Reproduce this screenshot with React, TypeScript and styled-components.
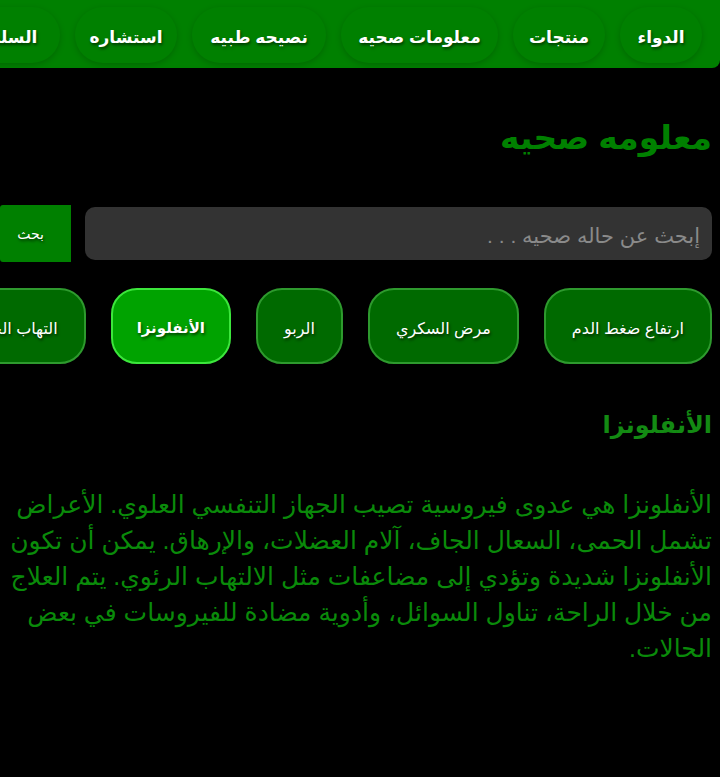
import React, { useState } from "react";
import styled, { createGlobalStyle } from "styled-components";

const Global = createGlobalStyle`
  html, body { margin: 0; padding: 0; background: #000; }
  body { font-family: Arial, "Liberation Sans", "DejaVu Sans", sans-serif; direction: rtl; overflow: hidden; }
  * { box-sizing: border-box; }
`;

const Nav = styled.nav`
  background: #008000;
  height: 68px;
  display: flex;
  align-items: center;
  gap: 15px;
  padding: 2px 18px 0 0;
  overflow: hidden;
  border-bottom-right-radius: 8px;
`;

const NavItem = styled.a<{ $w: number }>`
  flex: 0 0 auto;
  width: ${(p) => p.$w}px;
  height: 56px;
  border-radius: 28px;
  display: flex;
  align-items: center;
  justify-content: center;
  padding-top: 4px;
  color: #fff;
  font-weight: bold;
  font-size: 17px;
  text-shadow: 1px 2px 3px rgba(0, 0, 0, 0.55);
  box-shadow: 0 2px 6px rgba(0, 0, 0, 0.18);
  white-space: nowrap;
`;

const Main = styled.main`
  padding: 0 8px 0 0;
`;

const Title = styled.h1`
  margin: 50px 0 0;
  color: #008000;
  font-size: 33px;
  font-weight: bold;
  line-height: 40px;
`;

const SearchRow = styled.div`
  display: flex;
  align-items: center;
  gap: 14px;
  margin-top: 47px;
`;

const SearchInput = styled.input`
  flex: 1;
  height: 53px;
  background: #333;
  border: none;
  border-radius: 10px;
  padding: 4px 12px 0;
  color: #ddd;
  font-family: inherit;
  font-size: 21px;
  direction: rtl;
  outline: none;
  &::placeholder { color: #8a8a8a; }
`;

const SearchButton = styled.button`
  flex: 0 0 71px;
  height: 57px;
  background: #008000;
  border: none;
  border-radius: 3px 0 0 3px;
  padding: 0 10px 0 0;
  color: #fff;
  font-family: inherit;
  font-size: 14px;
  text-shadow: 1px 2px 3px rgba(0, 0, 0, 0.6);
`;

const Tabs = styled.div`
  display: flex;
  gap: 25px;
  margin-top: 26px;
  overflow: hidden;
`;

const Tab = styled.button<{ $active?: boolean }>`
  flex: 0 0 auto;
  height: 76px;
  padding: 4px ${(p) => (p.$active ? 24 : 26)}px 0;
  border-radius: 26px;
  border: 2px solid ${(p) => (p.$active ? "#3ce63c" : "#2e9a2e")};
  background: ${(p) => (p.$active ? "#00a300" : "#006a00")};
  color: #fff;
  font-family: inherit;
  font-size: ${(p) => (p.$active ? 15 : 16)}px;
  font-weight: ${(p) => (p.$active ? "bold" : "normal")};
  text-shadow: 1px 2px 3px rgba(0, 0, 0, 0.6);
  white-space: nowrap;
`;

const Heading = styled.h2`
  margin: 44px 0 0;
  color: #138a13;
  font-size: 24px;
  font-weight: bold;
  line-height: 34px;
`;

const Body = styled.p`
  margin: 44px 0 0;
  color: #0a8a0a;
  font-size: 25px;
  line-height: 36px;
`;

const navItems: [string, number][] = [
  ["الدواء", 82],
  ["منتجات", 92],
  ["معلومات صحيه", 157],
  ["نصيحه طبيه", 134],
  ["استشاره", 102],
  ["السله", 92],
];

const tabs = ["ارتفاع ضغط الدم", "مرض السكري", "الربو", "الأنفلونزا", "التهاب الحلق"];

export default function App() {
  const [active, setActive] = useState("الأنفلونزا");
  return (
    <>
      <Global />
      <Nav>
        {navItems.map(([t, w]) => (
          <NavItem key={t} $w={w}>{t}</NavItem>
        ))}
      </Nav>
      <Main>
        <Title>معلومه صحيه</Title>
        <SearchRow>
          <SearchInput placeholder="إبحث عن حاله صحيه . . ." />
          <SearchButton>بحث</SearchButton>
        </SearchRow>
        <Tabs>
          {tabs.map((t) => (
            <Tab key={t} $active={t === active} onClick={() => setActive(t)}>{t}</Tab>
          ))}
        </Tabs>
        <Heading>الأنفلونزا</Heading>
        <Body>
          الأنفلونزا هي عدوى فيروسية تصيب الجهاز التنفسي العلوي. الأعراض تشمل الحمى، السعال الجاف، آلام العضلات، والإرهاق. يمكن أن تكون الأنفلونزا شديدة وتؤدي إلى مضاعفات مثل الالتهاب الرئوي. يتم العلاج من خلال الراحة، تناول السوائل، وأدوية مضادة للفيروسات في بعض الحالات.
        </Body>
      </Main>
    </>
  );
}
